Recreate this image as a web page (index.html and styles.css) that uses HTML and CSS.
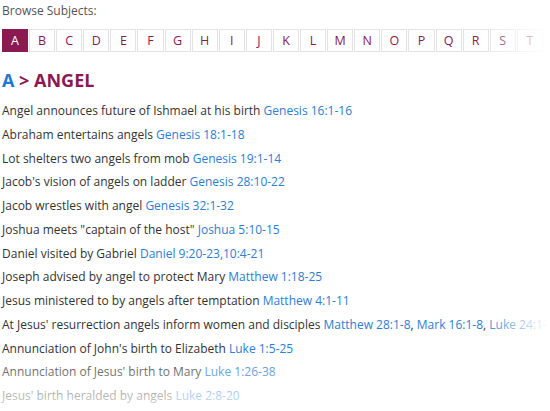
FILE: index.html
```html
<!DOCTYPE html>
<html lang="en">

<head>
    <meta charset="UTF-8">
    <meta name="viewport" content="width=device-width, initial-scale=1.0">
    <title>Browse Subjects</title>
    <link rel="stylesheet" href="styles.css">
</head>

<body>
    <div class="page">
        <div class="label">Browse Subjects:</div>
        <div class="letters">
            <a class="letter active">A</a>
            <a class="letter">B</a>
            <a class="letter">C</a>
            <a class="letter">D</a>
            <a class="letter">E</a>
            <a class="letter">F</a>
            <a class="letter">G</a>
            <a class="letter">H</a>
            <a class="letter">I</a>
            <a class="letter">J</a>
            <a class="letter">K</a>
            <a class="letter">L</a>
            <a class="letter">M</a>
            <a class="letter">N</a>
            <a class="letter">O</a>
            <a class="letter">P</a>
            <a class="letter">Q</a>
            <a class="letter">R</a>
            <a class="letter">S</a>
            <a class="letter">T</a>
        </div>
        <h2 class="title"><span class="crumb">A</span> &gt; ANGEL</h2>
        <ul class="list">
            <li>Angel announces future of Ishmael at his birth <a>Genesis 16:1-16</a></li>
            <li>Abraham entertains angels <a>Genesis 18:1-18</a></li>
            <li>Lot shelters two angels from mob <a>Genesis 19:1-14</a></li>
            <li>Jacob's vision of angels on ladder <a>Genesis 28:10-22</a></li>
            <li>Jacob wrestles with angel <a>Genesis 32:1-32</a></li>
            <li>Joshua meets "captain of the host" <a>Joshua 5:10-15</a></li>
            <li>Daniel visited by Gabriel <a>Daniel 9:20-23,10:4-21</a></li>
            <li>Joseph advised by angel to protect Mary <a>Matthew 1:18-25</a></li>
            <li>Jesus ministered to by angels after temptation <a>Matthew 4:1-11</a></li>
            <li>At Jesus' resurrection angels inform women and disciples <a>Matthew 28:1-8</a>, <a>Mark 16:1-8</a>, <a>Luke 24:1-12</a></li>
            <li>Annunciation of John's birth to Elizabeth <a>Luke 1:5-25</a></li>
            <li>Annunciation of Jesus' birth to Mary <a>Luke 1:26-38</a></li>
            <li>Jesus' birth heralded by angels <a>Luke 2:8-20</a></li>
        </ul>
    </div>
    <div class="fade-right"></div>
    <div class="fade-bottom"></div>
</body>

</html>
```

FILE: styles.css
```css
* {
    padding: 0;
    margin: 0;
    box-sizing: border-box;
}

body {
    font-family: "Open Sans", "Liberation Sans", sans-serif;
    font-size: 12px;
    color: #333;
    background: #fff;
    overflow: hidden;
    height: 411px;
}

.page {
    padding: 2px 2px 0;
    width: 700px;
}

.label {
    color: #555;
    line-height: 18px;
}

.letters {
    display: flex;
    gap: 1px;
    margin-top: 9px;
}

.letter {
    display: flex;
    justify-content: center;
    align-items: center;
    width: 26.1px;
    height: 23px;
    border: 1px solid #e3e3e3;
    color: #8b1a50;
    font-size: 12.5px;
}

.letter.active {
    background-color: #8b1a50;
    border-color: #8b1a50;
    color: #fff;
}

.title {
    margin-top: 15px;
    font-size: 18px;
    font-weight: 700;
    line-height: 26px;
    color: #8b1a50;
}

.crumb {
    color: #1f78d1;
}

.list {
    list-style: none;
    margin-top: 6px;
    white-space: nowrap;
}

.list li {
    line-height: 23.75px;
}

.list a {
    color: #2d7dd2;
}

.fade-right {
    position: fixed;
    top: 0;
    right: 0;
    width: 70px;
    height: 100%;
    background: linear-gradient(to right, rgba(255, 255, 255, 0), #fff);
}

.fade-bottom {
    position: fixed;
    left: 0;
    bottom: 0;
    width: 100%;
    height: 60px;
    background: linear-gradient(to bottom, rgba(255, 255, 255, 0), rgba(255, 255, 255, 0.85));
}
```
